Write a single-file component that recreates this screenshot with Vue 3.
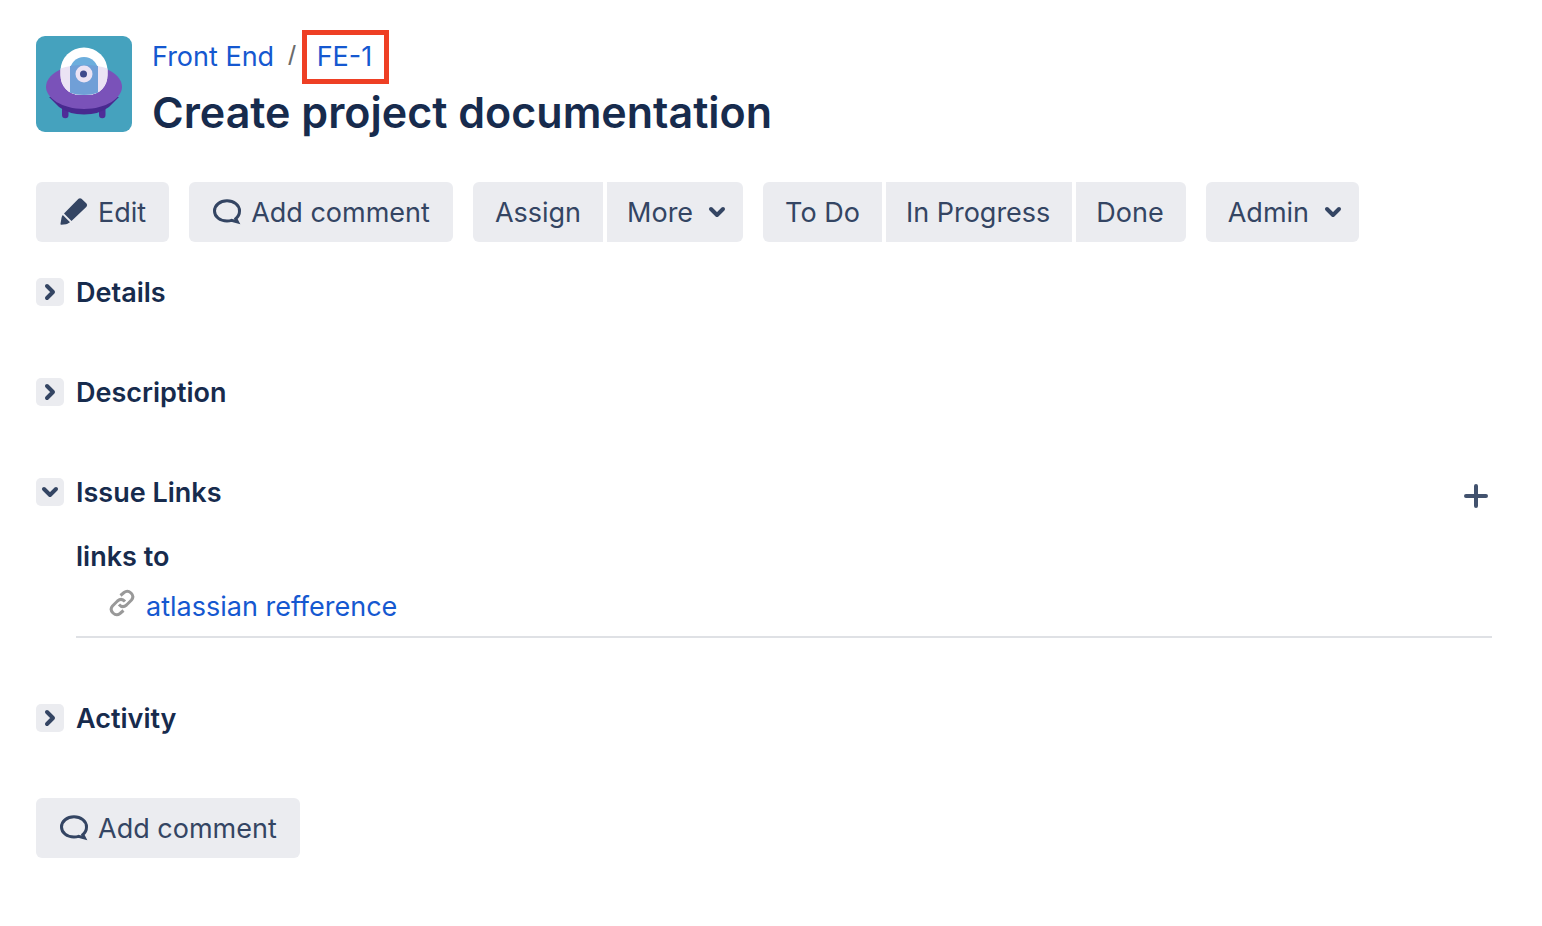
<script setup>
import { reactive } from 'vue'

const open = reactive({ details: false, description: false, links: true, activity: false })
const toggle = (key) => { open[key] = !open[key] }
</script>

<template>
  <main class="issue">
    <header class="issue-header">
      <svg class="avatar" viewBox="0 0 96 96" role="img" aria-label="Front End project">
        <rect width="96" height="96" rx="9" fill="#45a2be" />
        <path d="M26 70h7v9q0 3.500-3.500 3.500T26 79zM63 70h7v9q0 3.500-3.500 3.500T70 79z" fill="none" />
        <path d="M26 70h6.500v9q0 3.200-3.200 3.200T26 79zM63 70h6.500v9q0 3.200-3.200 3.200T63 79z" fill="#4f2c98" />
        <path d="M13 61L23 71Q33 78.500 48 78.500T73 71L83 61Z" fill="#48298f" />
        <path d="M48 29C70 29 86 39 86 51C86 62 70 73 48 73S10 62 10 51C10 39 26 29 48 29Z" fill="#7a52b9" />
        <path d="M24.500 34.500a23.500 23 0 0 1 47 0V39C71.500 50 64 58.800 52 58.800H44C32 58.800 24.500 50 24.500 39Z" fill="#fff" />
        <path d="M24.500 32.600Q34 29 48 29T71.500 32.600V39C71.500 50 64 58.800 52 58.800H44C32 58.800 24.500 50 24.500 39Z" fill="#ebe3f4" />
        <path d="M34 35a14 14 0 0 1 28 0V56.500Q56 58.800 48 58.800T34 56.500Z" fill="#6caedd" />
        <path d="M34 30Q40 29 48 29T62 30V56.500Q56 58.800 48 58.800T34 56.500Z" fill="#709fd7" />
        <circle cx="48" cy="38" r="8.500" fill="#ebe3f4" />
        <circle cx="47.500" cy="38" r="3.500" fill="#3f4a8c" />
      </svg>
      <div class="heading">
        <nav class="breadcrumbs" aria-label="Breadcrumbs">
          <a href="#project">Front End</a>
          <span class="slash">/</span>
          <a class="issue-key" href="#FE-1">FE-1</a>
        </nav>
        <h1>Create project documentation</h1>
      </div>
    </header>

    <div class="toolbar">
      <div class="group">
        <button class="with-icon" type="button">
          <svg class="icon" viewBox="0 0 32 32" aria-hidden="true">
            <path d="M20.500 1.800Q22 .700 23.500 1.800L28.500 6.500Q29.800 8 28.500 9.800L13.500 24L6 16.500ZM4.800 18L12 25.200L9.500 26.800Q9 27.200 8 27.300L3.200 27.800Q2.300 27.800 2.500 26.800L3.400 21.500Q3.500 20.500 4 19.300Z" />
          </svg>
          Edit
        </button>
      </div>
      <div class="group">
        <button class="with-icon" type="button">
          <svg class="icon line" viewBox="0 0 32 32" aria-hidden="true">
            <path d="M16 3.800C22.800 3.800 28.500 8 28.500 14C28.500 17 27.200 19.700 24.800 21.600L26.500 25L20.500 23.300Q18.500 24 16 24C9 24 3.500 19.800 3.500 14S9 3.800 16 3.800Z" />
          </svg>
          Add comment
        </button>
      </div>
      <div class="group">
        <button type="button">Assign</button>
        <button type="button">
          More
          <svg class="chevron" viewBox="0 0 20 20" aria-hidden="true"><path d="M4 7L10 13L16 7" /></svg>
        </button>
      </div>
      <div class="group">
        <button type="button">To Do</button>
        <button type="button">In Progress</button>
        <button type="button">Done</button>
      </div>
      <div class="group">
        <button type="button">
          Admin
          <svg class="chevron" viewBox="0 0 20 20" aria-hidden="true"><path d="M4 7L10 13L16 7" /></svg>
        </button>
      </div>
    </div>

    <section class="module compact">
      <div class="module-head">
        <button class="toggle" type="button" aria-labelledby="details" :aria-expanded="open.details" @click="toggle('details')">
          <svg class="chevron" :class="{ closed: !open.details }" viewBox="0 0 20 20"><path d="M4 7L10 13L16 7" /></svg>
        </button>
        <h2 id="details">Details</h2>
      </div>
    </section>

    <section class="module compact">
      <div class="module-head">
        <button class="toggle" type="button" aria-labelledby="description" :aria-expanded="open.description" @click="toggle('description')">
          <svg class="chevron" :class="{ closed: !open.description }" viewBox="0 0 20 20"><path d="M4 7L10 13L16 7" /></svg>
        </button>
        <h2 id="description">Description</h2>
      </div>
    </section>

    <section class="module">
      <div class="module-head">
        <button class="toggle" type="button" aria-labelledby="links" :aria-expanded="open.links" @click="toggle('links')">
          <svg class="chevron" :class="{ closed: !open.links }" viewBox="0 0 20 20"><path d="M4 7L10 13L16 7" /></svg>
        </button>
        <h2 id="links">Issue Links</h2>
        <button class="add" type="button" aria-label="Link issue">
          <svg viewBox="0 0 32 32" aria-hidden="true"><path d="M16 6V26M6 16H26" /></svg>
        </button>
      </div>
      <dl v-if="open.links" class="links">
        <dt>links to</dt>
        <dd>
          <svg class="link-icon" viewBox="0 0 28 28" aria-hidden="true">
            <path d="M12.500 6.500L16 3.500Q19.500 .800 23 4Q26.500 7.500 23.500 11L18.500 16Q14.500 19.500 11 15.500" />
            <path d="M15.500 21.500L12 24.500Q8.500 27.200 5 24Q1.500 20.500 4.500 17L9.500 12Q13.500 8.500 17 12.500" />
          </svg>
          <a href="#reference">atlassian refference</a>
        </dd>
      </dl>
    </section>

    <section class="module">
      <div class="module-head">
        <button class="toggle" type="button" aria-labelledby="activity" :aria-expanded="open.activity" @click="toggle('activity')">
          <svg class="chevron" :class="{ closed: !open.activity }" viewBox="0 0 20 20"><path d="M4 7L10 13L16 7" /></svg>
        </button>
        <h2 id="activity">Activity</h2>
      </div>
    </section>

    <footer class="group">
      <button class="with-icon" type="button">
        <svg class="icon line" viewBox="0 0 32 32" aria-hidden="true">
          <path d="M16 3.800C22.800 3.800 28.500 8 28.500 14C28.500 17 27.200 19.700 24.800 21.600L26.500 25L20.500 23.300Q18.500 24 16 24C9 24 3.500 19.800 3.500 14S9 3.800 16 3.800Z" />
        </svg>
        Add comment
      </button>
    </footer>
  </main>
</template>

<style>
body {
  margin: 0;
  background: #fff;
}
</style>

<style scoped>
.issue {
  padding: 30px 50px 68px 36px;
  color: #172b4d;
  font: 400 27px/40px Inter, "Liberation Sans", sans-serif;
}
a {
  color: #1558d0;
  text-decoration: none;
}
h1, h2, dl, dt, dd {
  margin: 0;
}
.issue-header {
  display: flex;
  gap: 20px;
}
.avatar {
  flex: none;
  width: 96px;
  height: 96px;
  margin-top: 6px;
}
.breadcrumbs {
  display: flex;
  align-items: center;
}
.slash {
  margin: 0 6px 0 14px;
  padding-bottom: 2px;
  color: #6b6b6b;
  font-family: "Liberation Sans", sans-serif;
}
.issue-key {
  padding: 2px 12px 2px 10px;
  border: 5px solid #ee3f24;
}
h1 {
  font-size: 43px;
  font-weight: 600;
  line-height: 56px;
}
.toolbar {
  display: flex;
  flex-wrap: wrap;
  gap: 20px;
  margin: 42px 0 36px;
}
.group {
  display: flex;
  gap: 4px;
}
button {
  border: 0;
  font: inherit;
  cursor: pointer;
}
.group button {
  display: flex;
  align-items: center;
  height: 60px;
  padding: 2px 22px 0;
  color: #344563;
  background: #ebecf0;
}
.group button:first-child {
  border-top-left-radius: 6px;
  border-bottom-left-radius: 6px;
}
.group button:last-child {
  border-top-right-radius: 6px;
  border-bottom-right-radius: 6px;
}
.group button + button {
  padding-left: 20px;
}
.group .with-icon {
  padding-right: 23px;
}
.icon {
  width: 32px;
  height: 32px;
  margin-right: 8px;
  fill: #344563;
}
.line {
  fill: none;
  stroke: #344563;
  stroke-width: 3;
}
.chevron {
  width: 20px;
  height: 20px;
  fill: none;
  stroke: #344563;
  stroke-width: 4;
  stroke-linecap: round;
  stroke-linejoin: round;
}
.group .chevron {
  margin: 0 -6px 2px 14px;
}
.closed {
  transform: rotate(-90deg);
}
.module {
  margin-bottom: 66px;
}
.compact {
  margin-bottom: 72px;
}
.module-head {
  display: flex;
  align-items: center;
  height: 28px;
}
.toggle {
  display: flex;
  align-items: center;
  justify-content: center;
  width: 28px;
  height: 28px;
  margin-right: 12px;
  padding: 0;
  border-radius: 5px;
  background: #ebecf0;
}
h2, dt {
  font-size: 27px;
  font-weight: 600;
}
h2 {
  padding-top: 2px;
}
.add {
  width: 32px;
  height: 32px;
  margin: 8px 0 0 auto;
  padding: 0;
  background: none;
}
.add svg {
  display: block;
  stroke: #42526e;
  stroke-width: 4;
  stroke-linecap: round;
}
.links {
  margin: 31px 0 0 40px;
}
dd {
  display: flex;
  align-items: center;
  padding: 10px 0 9px 32px;
  border-bottom: 2px solid #dfe1e5;
}
.link-icon {
  width: 28px;
  height: 28px;
  margin: 0 10px 8px 0;
  fill: none;
  stroke: #999;
  stroke-width: 3;
}
</style>
